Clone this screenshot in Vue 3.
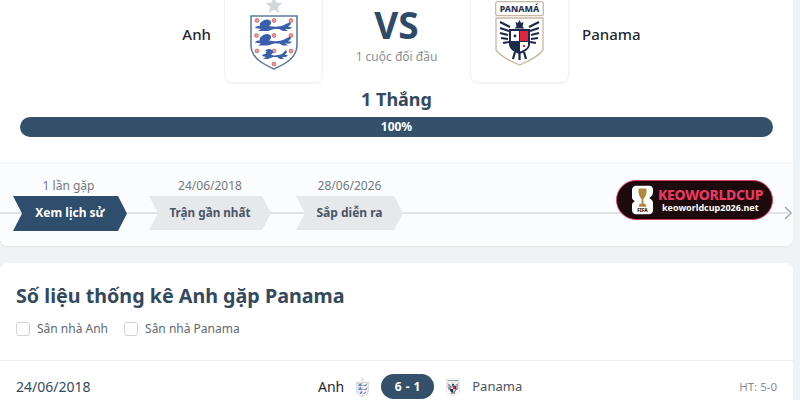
<script setup>
const steps = [
  { label: '1 lần gặp', text: 'Xem lịch sử', cls: 'active' },
  { label: '24/06/2018', text: 'Trận gần nhất', cls: 'second' },
  { label: '28/06/2026', text: 'Sắp diễn ra', cls: 'third' }
]
</script>

<template>
  <div class="page">
    <svg class="defs" width="0" height="0" aria-hidden="true">
      <symbol id="eng" viewBox="0 0 48 73">
        <path d="M24 0l2.300 5.600 6.100.5-4.600 4 1.400 5.900-5.200-3.200-5.200 3.200 1.400-5.900-4.600-4 6.100-.5z" fill="#d3d6da" />
        <path d="M1 19h46v29c0 13-12 19-23 24C13 67 1 61 1 48z" fill="#fff" stroke="#5f7c9f" stroke-width="1.600" />
        <g fill="#e3a19d" stroke="#c96a68" stroke-width=".9">
          <circle cx="7" cy="23.500" r="1.900" /><circle cx="24" cy="23.500" r="1.900" /><circle cx="41" cy="23.500" r="1.900" />
          <circle cx="6.500" cy="38.500" r="1.900" /><circle cx="24" cy="38.500" r="1.900" /><circle cx="41" cy="38.500" r="1.900" />
          <circle cx="7" cy="54" r="1.900" /><circle cx="24" cy="54" r="1.900" /><circle cx="41" cy="54" r="1.900" />
          <circle cx="24" cy="67" r="1.900" />
        </g>
        <g fill="#3a5fab">
          <path d="M12 24.500c2-2 6-3 8-1 2 2 1 4-1 5.500 5 1 11 1 15-1l6-3 1 2-3 3h4l-2 2h-5l3 2h-5l-4-2h-5l-6 2H8l3-2-6-1c1-2 3-2 5-2-1-2 0-3 2-4.500z" />
          <path d="M12 39c2-2 6-3 8-1 2 2 1 4-1 5.500 5 1 11 1 15-1l6-3 1 2-3 3h4l-2 2h-5l3 2h-5l-4-2h-5l-6 2H8l3-2-6-1c1-2 3-2 5-2-1-2 0-3 2-4.500z" />
          <path d="M15 54c1-2 5-3 7-1 2 2 1 3-1 5 4 1 8 0 11-1l4-4 1 2-2 3h3l-2 2h-4l2 2h-4l-3-2h-4l-5 2h-5l3-2-4-1c1-2 2-2 4-2-1-1 0-2 1-3z" />
        </g>
      </symbol>
      <symbol id="pan" viewBox="0 0 49 65">
        <rect x=".7" y=".7" width="47.600" height="14" rx="1.500" fill="#fff" stroke="#c9b89f" stroke-width="1.300" />
        <text x="24.500" y="11" text-anchor="middle" font-size="8.800" font-weight="800" font-family="'Noto Sans', sans-serif" fill="#2a3550">PANAMÁ</text>
        <path d="M1 17h47v32c-6 8-16 12-23.500 15C17 61 7 57 1 49z" fill="#fff" stroke="#c9b89f" stroke-width="1.300" />
        <g fill="none" stroke="#1d2a4b" stroke-width="2.200">
          <path d="M5 21l10 5M5 27l9 3M5 32l8 2M6 37l7 1M8 42l6-1" />
          <path d="M44 21l-10 5M44 27l-9 3M44 32l-8 2M43 37l-7 1M41 42l-6-1" />
          <path d="M20 51l-2 7M24.500 52v7M29 51l2 7" />
        </g>
        <path d="M24.500 19l1.500 3 2.500-1-1 4.500 2 2H19.500l2-2-1-4.500 2.500 1z" fill="#1d2a4b" />
        <path d="M14 28h21v15c0 5-5 8-10.500 10C19 51 14 48 14 43z" fill="#1d2a4b" />
        <rect x="16" y="30" width="8" height="10" fill="#fff" />
        <rect x="25" y="30" width="8" height="10" fill="#e0243f" />
        <path d="M25 41h8v3c0 3-4 5-8 6.500z" fill="#fff" />
        <circle cx="20" cy="35" r="1.400" fill="#1d2a4b" />
        <circle cx="29" cy="45" r="1.200" fill="#e0243f" />
      </symbol>
    </svg>

    <section class="card top-card">
      <div class="hero">
        <div class="match">
          <div class="team left">
            <span class="team-name">Anh</span>
            <div class="logo-box"><svg class="crest-eng"><use href="#eng" /></svg></div>
          </div>
          <div class="center">
            <div class="vs">VS</div>
            <div class="meet">1 cuộc đối đầu</div>
          </div>
          <div class="team right">
            <div class="logo-box"><svg class="crest-pan"><use href="#pan" /></svg></div>
            <span class="team-name">Panama</span>
          </div>
        </div>
        <div class="wins">1 Thắng</div>
        <div class="bar">100%</div>
      </div>

      <div class="timeline">
        <div class="line"></div>
        <div v-for="s in steps" :key="s.text" class="step" :class="s.cls">
          <div class="step-label">{{ s.label }}</div>
          <div class="chevron">{{ s.text }}</div>
        </div>
        <div class="brand">
          <svg class="brand-icon" viewBox="0 0 22 30">
            <path d="M4 0h14c3 0 4 2 4 4v3c0 3-2 5-4 6 2 1 4 3 4 5v8c0 2-2 4-4 4H4c-2 0-4-2-4-4v-6c0-2 2-3 3-4-2-1-3-2-3-4V4c0-2 2-4 4-4z" fill="#fff" />
            <path d="M7 3h8c1 5-1 9-3 11v5h2l1 3H7l1-3h2v-5C8 12 6 8 7 3z" fill="#b08a3c" />
            <text x="11" y="28" text-anchor="middle" font-size="5" font-weight="800" font-family="'Noto Sans', sans-serif" fill="#111">FIFA</text>
          </svg>
          <div class="brand-text">
            <div class="brand-name">KEOWORLDCUP</div>
            <div class="brand-url">keoworldcup2026.net</div>
          </div>
        </div>
        <svg class="next" viewBox="0 0 8 14"><path d="M1 1l6 6-6 6" fill="none" stroke="#a9aeb4" stroke-width="1.600" /></svg>
      </div>
    </section>

    <section class="card stats">
      <div class="stats-head">
        <h2 class="title">Số liệu thống kê Anh gặp Panama</h2>
        <div class="filters">
          <label class="filter"><span class="box"></span>Sân nhà Anh</label>
          <label class="filter"><span class="box"></span>Sân nhà Panama</label>
        </div>
      </div>
      <div class="row">
        <span class="date">24/06/2018</span>
        <div class="fixture">
          <span>Anh</span>
          <svg class="mini-eng"><use href="#eng" /></svg>
          <span class="score">6 - 1</span>
          <svg class="mini-pan"><use href="#pan" /></svg>
          <span class="away">Panama</span>
        </div>
        <span class="ht">HT: 5-0</span>
      </div>
    </section>
  </div>
</template>

<style>
html, body { margin: 0; overflow: hidden; background: #f0f3f6; }
</style>

<style scoped>
.page {
  width: 793px;
  height: 400px;
  overflow: hidden;
  font-family: "Noto Sans", sans-serif;
  color: #1f2937;
}
.defs { position: absolute; }
.card { background: #fff; }
.top-card { border-radius: 0 0 8px 8px; box-shadow: 0 1px 2px rgba(30, 50, 70, .08); }
.hero { height: 163px; box-sizing: border-box; display: flow-root; }
.match {
  display: grid;
  grid-template-columns: 1fr 147px 1fr;
  height: 100px;
  margin-top: -17px;
}
.team { display: flex; align-items: center; gap: 13px; }
.team.left { justify-content: flex-end; }
.team-name { font-size: 15px; font-weight: 500; color: #1f2730; position: relative; top: 1px; }
.logo-box {
  width: 99px;
  height: 100px;
  box-sizing: border-box;
  border: 1px solid #f0f1f3;
  border-radius: 8px;
  display: flex;
  align-items: center;
  justify-content: center;
  box-shadow: 0 1px 2px rgba(30, 50, 70, .05);
}
.crest-eng { width: 48px; height: 73px; }
.crest-pan { width: 49px; height: 65px; }
.center { padding-top: 17px; text-align: center; }
.vs { font-size: 37px; font-weight: 700; line-height: 50px; color: #2f4a68; }
.meet { font-size: 12px; line-height: 16px; color: #8b9096; margin-top: -1px; }
.wins {
  margin-top: 3px;
  text-align: center;
  font-size: 18px;
  line-height: 26px;
  font-weight: 700;
  color: #34495e;
}
.bar {
  margin: 5px 20px 0;
  height: 20px;
  border-radius: 10px;
  background: #34506b;
  color: #fff;
  font-size: 12px;
  font-weight: 700;
  line-height: 20px;
  text-align: center;
}
.timeline {
  position: relative;
  height: 83px;
  box-sizing: border-box;
  padding: 13px 0 0 13px;
  display: flex;
  background: #fbfcfd;
  border-top: 1px solid #f2f3f5;
  border-radius: 0 0 8px 8px;
  overflow: hidden;
}
.line {
  position: absolute;
  left: 0;
  right: 5px;
  top: 48px;
  height: 2px;
  background: #dfe2e6;
}
.step { position: relative; text-align: center; }
.step-label { font-size: 12px; line-height: 18px; color: #74797f; margin-bottom: 1px; }
.chevron {
  height: 34px;
  line-height: 33px;
  font-size: 12px;
  font-weight: 700;
  color: #4b5563;
  background: #e6e8ec;
  clip-path: polygon(0 0, calc(100% - 9px) 0, 100% 50%, calc(100% - 9px) 100%, 0 100%, 9px 50%);
}
.second .chevron { font-size: 11.700px; }
.active .chevron { background: #2f4d6c; color: #fff; height: 35px; }
.active { width: 114px; margin-right: 22px; }
.active .step-label { padding-right: 3px; }
.second { width: 122px; margin-right: 25px; }
.third { width: 107px; }
.brand {
  position: absolute;
  left: 616px;
  top: 16px;
  width: 157px;
  height: 40px;
  box-sizing: border-box;
  border: 1.500px solid #d9405f;
  border-radius: 20px;
  background: #1c0a0d;
  display: flex;
  align-items: center;
  gap: 5px;
  padding-left: 15px;
}
.brand-icon { width: 21px; height: 30px; flex: none; }
.brand-text { line-height: 1; }
.brand-name { font-size: 14px; font-weight: 800; letter-spacing: -.35px; color: #e8395f; line-height: 15px; }
.brand-url { font-size: 9px; font-weight: 700; color: #fff; line-height: 12px; padding-left: 4px; white-space: nowrap; }
.next {
  position: absolute;
  left: 784px;
  top: 42px;
  width: 8px;
  height: 14px;
}
.stats { margin-top: 17px; border-radius: 8px 8px 0 0; height: 140px; }
.stats-head {
  box-sizing: border-box;
  height: 98px;
  padding: 19px 16px 0;
  border-bottom: 1px solid #eaecef;
}
.title { margin: 0; font-size: 19.700px; line-height: 28px; font-weight: 700; color: #34495e; }
.filters { display: flex; gap: 16px; margin-top: 10px; }
.filter {
  display: flex;
  align-items: center;
  gap: 7px;
  font-size: 12px;
  line-height: 18px;
  color: #5f6973;
}
.box {
  width: 14px;
  height: 14px;
  box-sizing: border-box;
  border: 1px solid #cfd4d9;
  border-radius: 3px;
  background: #fff;
}
.row {
  display: grid;
  grid-template-columns: 302px 1fr auto;
  align-items: center;
  padding: 13px 16px 0;
  font-size: 14px;
  line-height: 25px;
}
.date { color: #34495e; }
.fixture { display: flex; align-items: center; color: #1f2730; }
.mini-eng { width: 13px; height: 20px; margin: 0 12px; opacity: .75; }
.score {
  width: 53px;
  height: 25px;
  border-radius: 13px;
  background: #34506b;
  color: #fff;
  font-size: 12px;
  font-weight: 700;
  text-align: center;
  letter-spacing: .4px;
}
.mini-pan { width: 14px; height: 18px; margin: 0 12px; }
.away { color: #4b5560; font-size: 13px; }
.ht { font-size: 11.500px; color: #8a8f95; }
</style>
